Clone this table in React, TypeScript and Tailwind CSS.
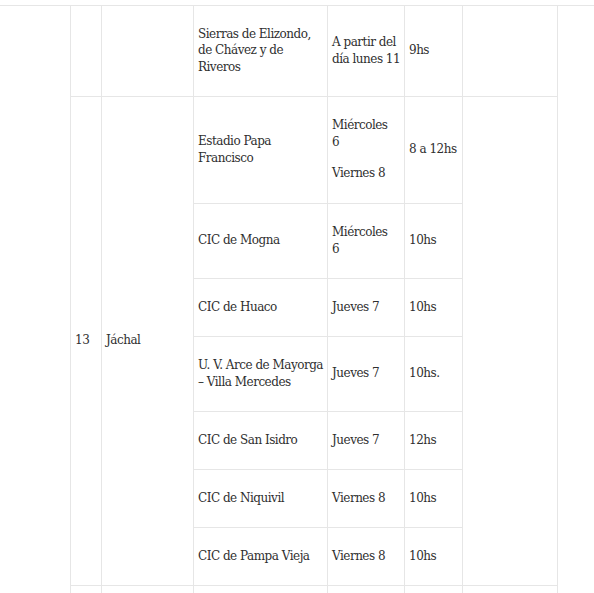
type Stop = {
  place: string[];
  day: string[][];
  time: string;
  h: string;
};

const stops: Stop[] = [
  { place: ["Estadio Papa", "Francisco"], day: [["Miércoles", "6"], ["Viernes 8"]], time: "8 a 12hs", h: "h-[107px]" },
  { place: ["CIC de Mogna"], day: [["Miércoles", "6"]], time: "10hs", h: "h-[75px]" },
  { place: ["CIC de Huaco"], day: [["Jueves 7"]], time: "10hs", h: "h-[58px]" },
  { place: ["U. V. Arce de Mayorga", "– Villa Mercedes"], day: [["Jueves 7"]], time: "10hs.", h: "h-[75px]" },
  { place: ["CIC de San Isidro"], day: [["Jueves 7"]], time: "12hs", h: "h-[58px]" },
  { place: ["CIC de Niquivil"], day: [["Viernes 8"]], time: "10hs", h: "h-[58px]" },
  { place: ["CIC de Pampa Vieja"], day: [["Viernes 8"]], time: "10hs", h: "h-[58px]" },
];

const cell = "border border-[#e6e6e6] pl-[4px] pr-[2px] py-0 align-middle whitespace-nowrap";

function Lines({ lines }: { lines: string[] }) {
  return (
    <>
      {lines.map((line, i) => (
        <span key={i} className="block">
          {line}
        </span>
      ))}
    </>
  );
}

export default function App() {
  return (
    <div className="min-h-[593px] bg-white pt-[5px] font-['DejaVu_Serif',serif] text-[12px] leading-[16.7px] tracking-[-0.5px] text-[#2f2f2f]">
      <div className="border-t border-[#e6e6e6]">
        <table className="ml-[70px] w-[488px] table-fixed border-collapse text-left">
          <colgroup>
            <col className="w-[31px]" />
            <col className="w-[92px]" />
            <col className="w-[134px]" />
            <col className="w-[77px]" />
            <col className="w-[58px]" />
            <col className="w-[95px]" />
          </colgroup>
          <tbody>
            <tr className="h-[90px]">
              <td className={`${cell} border-t-0`}></td>
              <td className={`${cell} border-t-0`}></td>
              <td className={`${cell} border-t-0`}>
                <Lines lines={["Sierras de Elizondo,", "de Chávez y de", "Riveros"]} />
              </td>
              <td className={`${cell} border-t-0`}>
                <Lines lines={["A partir del", "día lunes 11"]} />
              </td>
              <td className={`${cell} border-t-0`}>9hs</td>
              <td className={`${cell} border-t-0`}></td>
            </tr>
            {stops.map((stop, i) => (
              <tr key={stop.place[0]} className={stop.h}>
                {i === 0 ? (
                  <>
                    <td className={cell} rowSpan={stops.length}>
                      13
                    </td>
                    <td className={cell} rowSpan={stops.length}>
                      Jáchal
                    </td>
                  </>
                ) : null}
                <td className={cell}>
                  <Lines lines={stop.place} />
                </td>
                <td className={cell}>
                  {stop.day.map((para, j) => (
                    <div key={j} className={j > 0 ? "mt-[14px]" : ""}>
                      <Lines lines={para} />
                    </div>
                  ))}
                </td>
                <td className={cell}>{stop.time}</td>
                {i === 0 ? <td className={cell} rowSpan={stops.length}></td> : null}
              </tr>
            ))}
            <tr className="h-[58px]">
              <td className={cell}></td>
              <td className={cell}></td>
              <td className={cell}></td>
              <td className={cell}></td>
              <td className={cell}></td>
              <td className={cell}></td>
            </tr>
          </tbody>
        </table>
      </div>
    </div>
  );
}
